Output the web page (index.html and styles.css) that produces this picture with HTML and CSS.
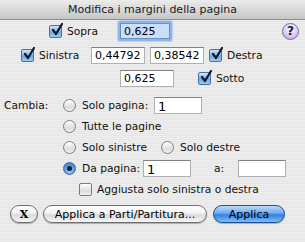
FILE: index.html
```html
<!DOCTYPE html>
<html lang="it">

<head>
    <meta charset="UTF-8">
    <title>Modifica i margini della pagina</title>
    <link rel="stylesheet" href="styles.css">
</head>

<body>
    <div class="dialog">
        <div class="titlebar">Modifica i margini della pagina</div>

        <div class="row row-top">
            <span class="cb on"><svg viewBox="0 0 14 14"><path d="M3 7 L6 11 L12 1" /></svg></span>
            <span class="lbl lbl-sopra">Sopra</span>
            <span class="focus"><input class="field w50" type="text" value="0,625"></span>
            <span class="help">?</span>
        </div>

        <div class="row row-mid">
            <span class="cb on"><svg viewBox="0 0 14 14"><path d="M3 7 L6 11 L12 1" /></svg></span>
            <span class="lbl lbl-sinistra">Sinistra</span>
            <input class="field w54" type="text" value="0,44792">
            <input class="field w54 gap5" type="text" value="0,38542">
            <span class="cb on gap5"><svg viewBox="0 0 14 14"><path d="M3 7 L6 11 L12 1" /></svg></span>
            <span class="lbl">Destra</span>
        </div>

        <div class="row row-bot">
            <input class="field w54" type="text" value="0,625">
            <span class="cb on gap-sotto"><svg viewBox="0 0 14 14"><path d="M3 7 L6 11 L12 1" /></svg></span>
            <span class="lbl">Sotto</span>
        </div>

        <div class="scope">
            <div class="row">
                <span class="scope-label">Cambia:</span>
                <span class="radio"></span>
                <span class="lbl lbl-solo">Solo pagina:</span>
                <input class="field w48 big" type="text" value="1">
            </div>
            <div class="row indent">
                <span class="radio"></span>
                <span class="lbl">Tutte le pagine</span>
            </div>
            <div class="row indent">
                <span class="radio"></span>
                <span class="lbl lbl-sin">Solo sinistre</span>
                <span class="radio"></span>
                <span class="lbl">Solo destre</span>
            </div>
            <div class="row indent">
                <span class="radio on"></span>
                <span class="lbl lbl-da">Da pagina:</span>
                <input class="field w48 big" type="text" value="1">
                <span class="lbl lbl-a">a:</span>
                <input class="field w48" type="text" value="">
            </div>
            <div class="row indent-cb">
                <span class="cb"></span>
                <span class="lbl">Aggiusta solo sinistra o destra</span>
            </div>
        </div>

        <div class="buttons">
            <button class="btn btn-x">X</button>
            <button class="btn btn-parts">Applica a Parti/Partitura...</button>
            <button class="btn btn-default">Applica</button>
        </div>
    </div>
</body>

</html>
```

FILE: styles.css
```css
* {
    box-sizing: border-box;
    padding: 0;
    margin: 0;
}

html,
body {
    width: 100%;
    height: 100%;
}

body {
    font-family: "DejaVu Sans", "Liberation Sans", sans-serif;
    font-size: 10.7px;
    color: #000;
}

.dialog {
    width: 305px;
    height: 242px;
    background: repeating-linear-gradient(#eeeeee 0 1px, #e6e6e6 1px 2px);
}

.titlebar {
    height: 20px;
    line-height: 19px;
    text-align: center;
    font-size: 11px;
    color: #1a1a1a;
    background: linear-gradient(#ececec, #c6c6c6);
    border-bottom: 1px solid #8e8e8e;
}

.row {
    display: flex;
    align-items: center;
    height: 21px;
}

.lbl {
    white-space: nowrap;
    color: #111;
}

/* --- margin rows --- */
.row-top {
    height: 22px;
    padding-left: 49px;
    padding-right: 6px;
}

.row-mid {
    margin-top: 3px;
    padding-left: 21px;
}

.row-bot {
    margin-top: 2px;
    padding-left: 120px;
}

.lbl-sopra {
    width: 51px;
    margin-left: 5px;
}

.lbl-sinistra {
    width: 52px;
    margin-left: 5px;
}

.cb + .lbl {
    margin-left: 5px;
}

.gap5 {
    margin-left: 5px;
}

.gap-sotto {
    margin-left: 24px;
}

/* --- inputs --- */
.field {
    height: 17px;
    padding: 0 3px;
    font-family: inherit;
    font-size: 11px;
    color: #000;
    background: #fff;
    border: 1px solid #b0b0b0;
    border-top-color: #808080;
    outline: none;
}

.field.big {
    font-size: 13px;
    padding-top: 1px;
}

.w50 {
    width: 50px;
}

.w54 {
    width: 54px;
}

.w48 {
    width: 48px;
}

.focus {
    display: inline-flex;
    padding: 2px;
    border-radius: 2px;
    background: #8fb5e6;
    box-shadow: 0 0 1px 1px #b6d0f2;
}

.focus .field {
    background: #c9defb;
    border-color: #6d8fba;
    height: 16px;
}

/* --- checkboxes --- */
.cb {
    position: relative;
    flex: none;
    width: 13px;
    height: 13px;
    border: 1px solid #7b7b7b;
    border-radius: 2px;
    background: linear-gradient(#ffffff, #dedede 60%, #f2f2f2);
}

.cb.on {
    border-color: #4a6f9c;
    background: linear-gradient(#d4e8fc, #6fa9e6 55%, #9ecbf5);
}

.cb svg {
    position: absolute;
    left: 0;
    top: -3px;
    width: 14px;
    height: 14px;
    overflow: visible;
}

.cb path {
    fill: none;
    stroke: #0e1a2a;
    stroke-width: 2.2;
    stroke-linecap: round;
    stroke-linejoin: round;
}

/* --- help --- */
.help {
    margin-left: auto;
    width: 17px;
    height: 17px;
    border-radius: 50%;
    border: 1px solid #7a6c9c;
    background: radial-gradient(circle at 50% 30%, #fbf6ff, #d9c6f3 60%, #b29ddc);
    font-weight: bold;
    font-size: 12px;
    line-height: 15px;
    text-align: center;
    color: #1c1530;
}

/* --- scope section --- */
.scope {
    margin-top: 6px;
}

.scope-label {
    width: 63px;
    padding-left: 4px;
    color: #111;
}

.indent {
    padding-left: 63px;
}

.indent-cb {
    padding-left: 79px;
}

.radio {
    flex: none;
    position: relative;
    width: 13px;
    height: 13px;
    border-radius: 50%;
    border: 1px solid #7f7f7f;
    background: linear-gradient(#ffffff, #dcdcdc 65%, #f4f4f4);
}

.radio + .lbl {
    margin-left: 6px;
}

.radio.on {
    border-color: #3f6898;
    background: radial-gradient(circle at 50% 70%, #a8d2fa, #4f94e0 60%, #2c6fc2);
}

.radio.on::after {
    content: "";
    position: absolute;
    left: 3px;
    top: 3px;
    width: 5px;
    height: 5px;
    border-radius: 50%;
    background: #0d1a2c;
}

.lbl-solo {
    width: 72px;
}

.lbl-sin {
    width: 79px;
}

.lbl-da {
    width: 61px;
}

.lbl-a {
    width: 24px;
    margin-left: 23px;
}

/* --- buttons --- */
.buttons {
    display: flex;
    gap: 5px;
    margin-top: 5px;
    padding-left: 10px;
}

.btn {
    height: 18px;
    font-family: inherit;
    font-size: 11px;
    color: #000;
    border: 1px solid #6f6f6f;
    border-radius: 9px;
    background: linear-gradient(#ffffff, #f3f3f3 45%, #dadada 55%, #f6f6f6);
    box-shadow: 0 1px 1px rgba(0, 0, 0, 0.25);
}

.btn-x {
    width: 28px;
    font-family: "DejaVu Serif", "Liberation Serif", serif;
    font-weight: bold;
}

.btn-parts {
    width: 164px;
}

.btn-default {
    width: 72px;
    margin-left: 1px;
    border-color: #1f4f8f;
    background: linear-gradient(#bcdcfc, #6eaaf0 45%, #3381e0 55%, #7cbff8);
}
```
